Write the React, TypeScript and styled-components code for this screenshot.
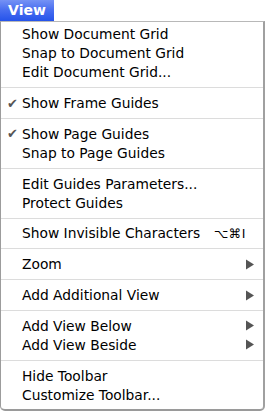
import React from 'react'
import styled, { createGlobalStyle } from 'styled-components'

const GlobalStyle = createGlobalStyle`
  html, body {
    margin: 0;
    padding: 0;
    background: #ffffff;
  }
  body {
    font-family: 'DejaVu Sans', 'Liberation Sans', sans-serif;
    -webkit-font-smoothing: antialiased;
  }
`

const Root = styled.div`
  display: flex;
  flex-direction: column;
  align-items: flex-start;
  width: 266px;
  height: 412px;
`

const MenuTitle = styled.div`
  width: 54px;
  height: 21px;
  display: flex;
  align-items: center;
  justify-content: center;
  box-sizing: border-box;
  padding-bottom: 1px;
  background: linear-gradient(to bottom, #7592f5 0%, #4a6ff0 45%, #2553ea 100%);
  color: #ffffff;
  font-weight: bold;
  font-size: 14px;
`

const MenuPanel = styled.div`
  width: 265px;
  height: 390px;
  box-sizing: border-box;
  display: flex;
  flex-direction: column;
  padding: 3px 0 5px 0;
  background: #ffffff;
  border-top: 1px solid #b8b8b8;
  border-left: 1px solid #9c9c9c;
  border-right: 2px solid #a0a0a0;
  border-bottom: 2px solid #9a9a9a;
  border-radius: 0 0 5px 5px;
`

const Item = styled.div`
  height: 19px;
  display: flex;
  align-items: center;
  padding: 0 9px 0 0;
  font-size: 13.8px;
  color: #000000;
  white-space: nowrap;
`

const CheckCell = styled.span`
  width: 21px;
  display: flex;
  justify-content: center;
  padding-left: 2px;
  box-sizing: border-box;
  color: #555555;
  font-size: 13px;
`

const Label = styled.span`
  flex: 1;
`

const Shortcut = styled.span`
  font-size: 12.5px;
  margin-right: 8px;
  letter-spacing: 0.5px;
`

const Separator = styled.div`
  height: 12px;
  display: flex;
  align-items: center;
  &::after {
    content: '';
    flex: 1;
    height: 1px;
    background: #dcdcdc;
  }
`

const Arrow = () => (
  <svg width="9" height="11" viewBox="0 0 9 11">
    <path d="M1 0.5 L9 5.5 L1 10.5 Z" fill="#555555" />
  </svg>
)

type Entry =
  | { sep: true }
  | { label: string; checked?: boolean; shortcut?: string; submenu?: boolean; sep?: false }

const entries: Entry[] = [
  { label: 'Show Document Grid' },
  { label: 'Snap to Document Grid' },
  { label: 'Edit Document Grid...' },
  { sep: true },
  { label: 'Show Frame Guides', checked: true },
  { sep: true },
  { label: 'Show Page Guides', checked: true },
  { label: 'Snap to Page Guides' },
  { sep: true },
  { label: 'Edit Guides Parameters...' },
  { label: 'Protect Guides' },
  { sep: true },
  { label: 'Show Invisible Characters', shortcut: '⌥⌘I' },
  { sep: true },
  { label: 'Zoom', submenu: true },
  { sep: true },
  { label: 'Add Additional View', submenu: true },
  { sep: true },
  { label: 'Add View Below', submenu: true },
  { label: 'Add View Beside', submenu: true },
  { sep: true },
  { label: 'Hide Toolbar' },
  { label: 'Customize Toolbar...' },
]

export default function App() {
  return (
    <Root>
      <GlobalStyle />
      <MenuTitle>View</MenuTitle>
      <MenuPanel>
        {entries.map((e, i) =>
          e.sep ? (
            <Separator key={i} />
          ) : (
            <Item key={i}>
              <CheckCell>{e.checked ? '✔' : ''}</CheckCell>
              <Label>{e.label}</Label>
              {e.shortcut && <Shortcut>{e.shortcut}</Shortcut>}
              {e.submenu && <Arrow />}
            </Item>
          )
        )}
      </MenuPanel>
    </Root>
  )
}
